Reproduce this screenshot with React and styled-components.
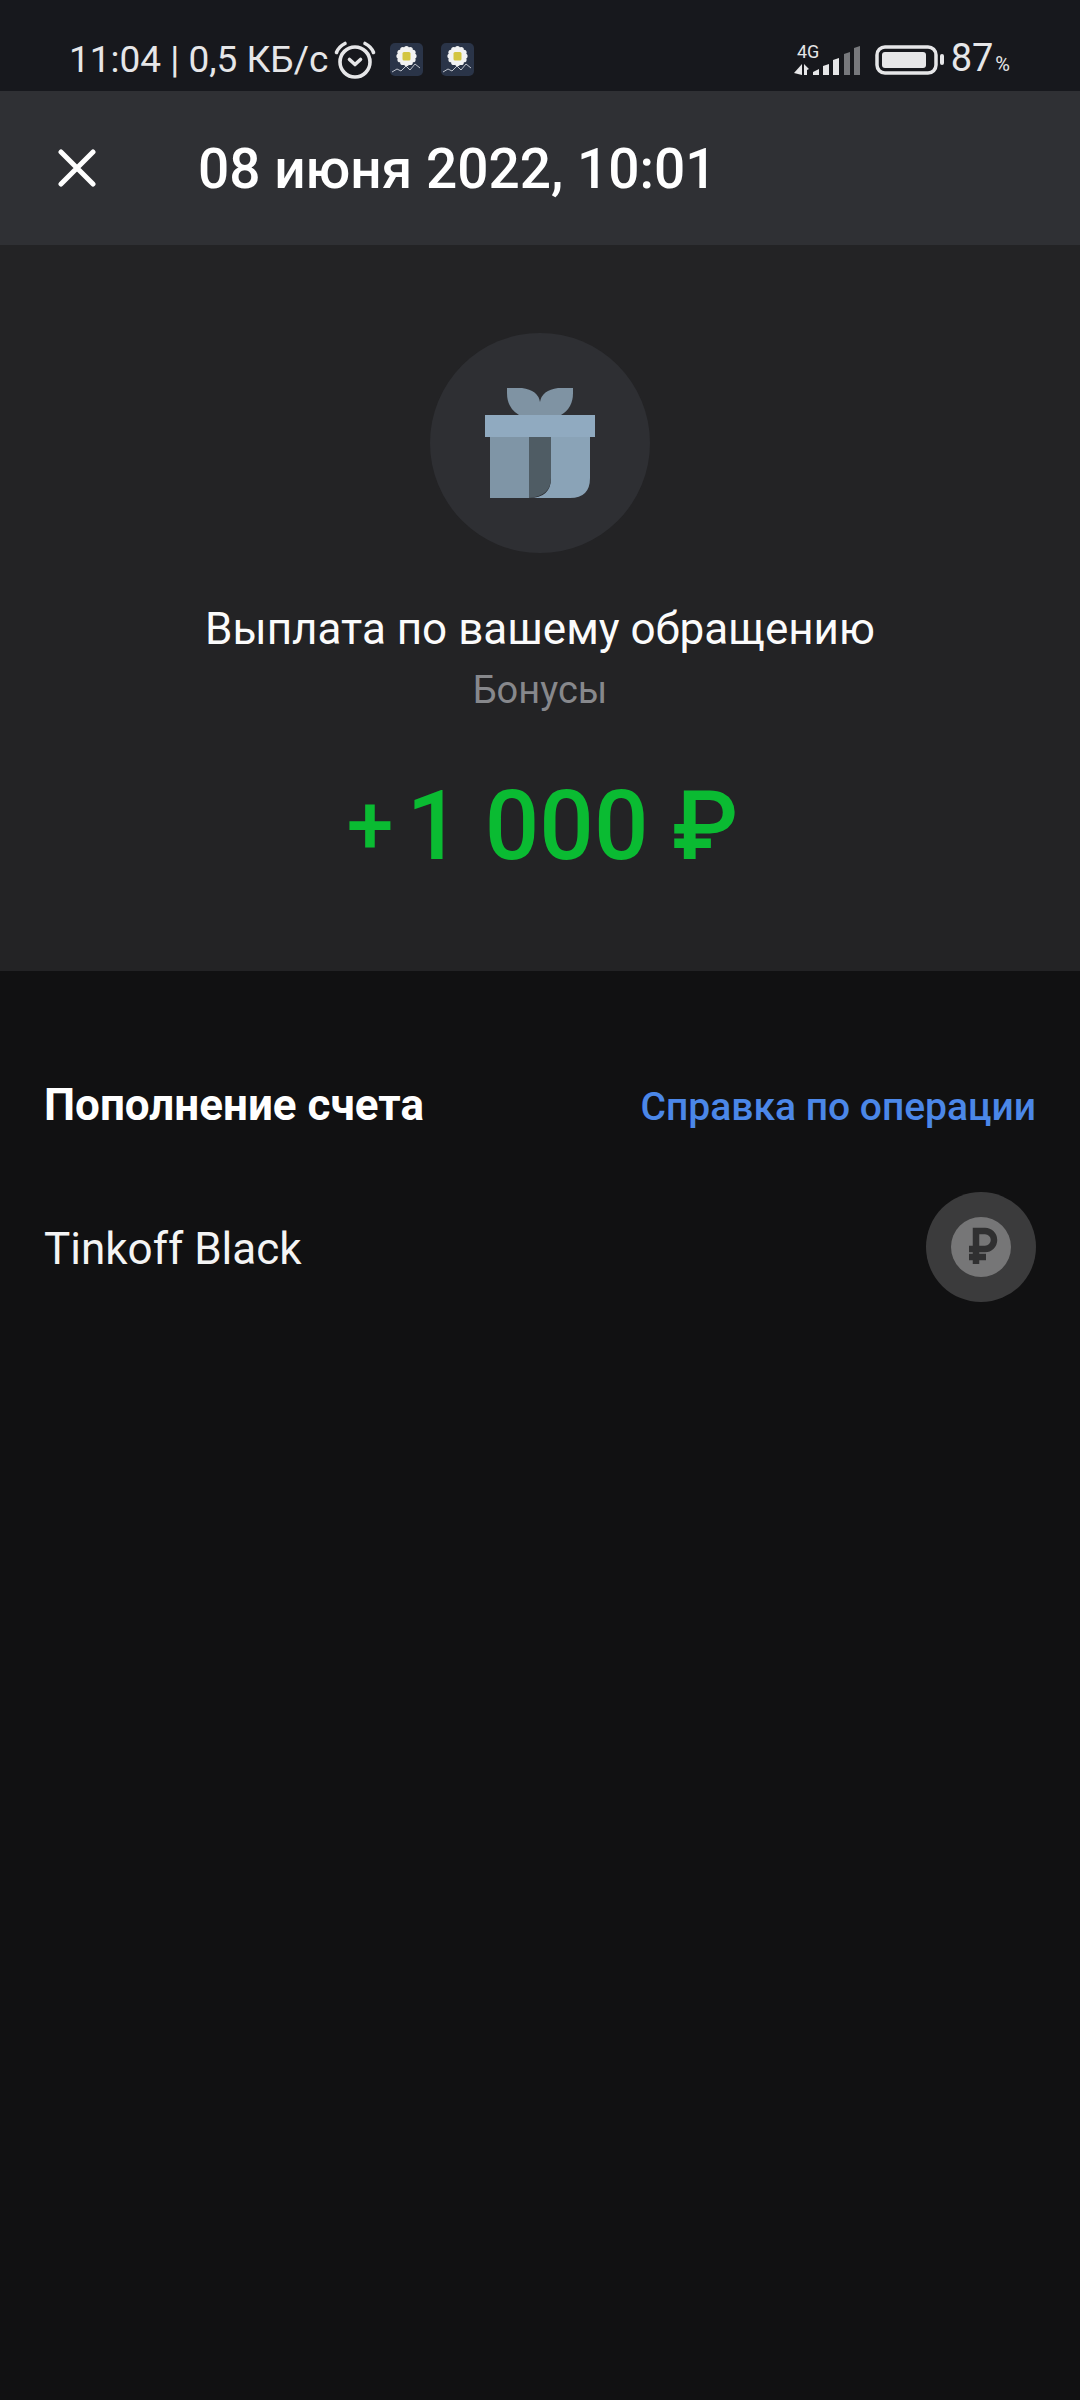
import React from "react";
import styled, { createGlobalStyle } from "styled-components";

const Global = createGlobalStyle`
  html, body { margin: 0; padding: 0; background: #111112; }
  * { box-sizing: border-box; }
`;
const Page = styled.div`
  width: 1080px; height: 2400px; background: #111112; color: #fff;
  font-family: Roboto, "Noto Sans", sans-serif;
  display: flex; flex-direction: column; overflow: hidden;
`;
const StatusBar = styled.div`
  height: 91px; background: #17181d; display: flex; align-items: center;
  padding: 28px 0 0 69px; color: #e6e6e8; font-size: 37px; line-height: 42px; font-weight: 400;
`;
const StatusText = styled.span`white-space: nowrap;`;
const AlarmIcon = styled.svg`width: 44px; height: 40px; margin-left: 5px; flex: none;`;
const AppIcon = styled.svg`width: 33px; height: 33px; margin-left: ${p => p.$gap}px; flex: none;`;
const StatusRight = styled.div`margin-left: auto; display: flex; align-items: center; padding-right: 70px;`;
const SignalIcon = styled.svg`width: 68px; height: 34px; flex: none; overflow: visible;`;
const BatteryIcon = styled.svg`width: 70px; height: 30px; margin-left: 13px; flex: none;`;
const BatteryText = styled.span`margin: 3px 0 0 6px; font-size: 38px; white-space: nowrap;`;
const Percent = styled.span`font-size: 20px; margin-left: 2px;`;
const Header = styled.header`
  height: 154px; background: #2f3034; display: flex; align-items: center; padding-left: 58px;
`;
const CloseIcon = styled.svg`width: 38px; height: 38px; flex: none;`;
const Title = styled.h1`
  margin: 2px 0 0 102px; font-size: 55px; line-height: 64px; font-weight: 500; white-space: nowrap;
`;
const Hero = styled.section`
  height: 726px; background: #232325; display: flex; flex-direction: column; align-items: center;
  padding-top: 88px;
`;
const GiftCircle = styled.svg`width: 220px; height: 220px; flex: none;`;
const HeroTitle = styled.div`margin-top: 50px; font-size: 44px; line-height: 52px; color: #fbfbfb;`;
const HeroSub = styled.div`margin-top: 10px; font-size: 38px; line-height: 50px; color: #87888c;`;
const Amount = styled.div`
  margin-top: 53px; padding-left: 5px; font-size: 96px; line-height: 116px; font-weight: 500; color: #0abb32;
  white-space: nowrap; display: flex; align-items: center;
`;
const PlusSign = styled.span`margin-right: 13px; font-size: 84px;`;
const Section = styled.section`padding: 106px 44px 0;`;
const SectionHead = styled.div`display: flex; justify-content: space-between; align-items: center; height: 56px;`;
const SectionTitle = styled.div`font-size: 44px; line-height: 56px; font-weight: 700; color: #fff;`;
const SectionLink = styled.a`font-size: 39px; line-height: 56px; margin-top: 3px; font-weight: 500; color: #4b87e8;`;
const AccountRow = styled.div`display: flex; justify-content: space-between; align-items: center; margin-top: 59px;`;
const AccountName = styled.div`font-size: 44px; line-height: 52px; margin-top: 3px; color: #f4f4f4;`;
const AccountIcon = styled.svg`width: 110px; height: 110px; flex: none;`;

const Emblem = ({ gap }) => (
  <AppIcon $gap={gap} viewBox="0 0 33 33">
    <rect width="33" height="33" rx="5" fill="#2a3448" />
    <g fill="#f2f2f2">
      {Array.from({ length: 12 }).map((_, i) => {
        const a = (i * Math.PI) / 6;
        return <circle key={i} cx={16.5 + 7.5 * Math.cos(a)} cy={13 + 7.5 * Math.sin(a)} r="2.6" />;
      })}
      <circle cx="16.5" cy="13" r="8" />
    </g>
    <rect x="12.5" y="9" width="8" height="8.5" rx="1.5" fill="#d3c541" />
    <path d="M2 29l5-3 4 2 5-5 4 4 5-6 5 4" fill="none" stroke="#cfd3da" strokeWidth="0.9" />
  </AppIcon>
);

export default function App() {
  return (
    <Page>
      <Global />
      <StatusBar>
        <StatusText>11:04 | 0,5 КБ/с</StatusText>
        <AlarmIcon viewBox="0 0 44 40">
          <circle cx="22" cy="22" r="15" fill="none" stroke="#e6e6e8" strokeWidth="3.6" />
          <path d="M16.5 19.5l5.5 5 5.5-5" fill="none" stroke="#e6e6e8" strokeWidth="3.6" strokeLinecap="round" strokeLinejoin="round" />
          <path d="M3.5 12.5C5 8.5 8 5.5 12 3.5M40.5 12.5C39 8.5 36 5.5 32 3.5" fill="none" stroke="#e6e6e8" strokeWidth="3.6" strokeLinecap="round" />
        </AlarmIcon>
        <Emblem gap={13} />
        <Emblem gap={18} />
        <StatusRight>
          <SignalIcon viewBox="797 42 68 34">
            <text x="800" y="57" fontSize="18" fill="#e6e6e8" fontFamily="Roboto, sans-serif">4G</text>
            <path d="M805 63v11l-8-2zM807 63l5 5-2 1v5h-3z" fill="#e6e6e8" />
            <g fill="#e6e6e8">
              <path d="M816 74v-3l6-3v6zM826 74v-9l6-2v11zM836 74v-15l6-2v17z" />
            </g>
            <path d="M847 74v-21l6-2v23zM857 74v-27l6-2v29z" fill="#77787c" />
          </SignalIcon>
          <BatteryIcon viewBox="0 0 70 30">
            <rect x="2" y="2" width="59" height="26" rx="8" fill="none" stroke="#e6e6e8" strokeWidth="3.5" />
            <rect x="7" y="7" width="44" height="16" rx="3" fill="#e6e6e8" />
            <rect x="65" y="9" width="4" height="11" rx="2" fill="#e6e6e8" />
          </BatteryIcon>
          <BatteryText>87<Percent>%</Percent></BatteryText>
        </StatusRight>
      </StatusBar>
      <Header>
        <CloseIcon viewBox="0 0 38 38">
          <path d="M3 3l32 32M35 3L3 35" stroke="#fff" strokeWidth="5" strokeLinecap="round" />
        </CloseIcon>
        <Title>08 июня 2022, 10:01</Title>
      </Header>
      <Hero>
        <GiftCircle viewBox="0 0 220 220">
          <circle cx="110" cy="110" r="110" fill="#2e2f33" />
          <path d="M77 55H92Q108 57 110 69Q112 57 128 55H143V60Q143 75 131 82H89Q77 75 77 60Z" fill="#7f93a3" />
          <path d="M60 104H99V165H60Z" fill="#7f95a6" />
          <path d="M99 165H140Q160 165 160 145V104H121V145Q121 165 99 165Z" fill="#8aa3b7" />
          <path d="M99 104H121V145Q121 163 99 165Z" fill="#4f5c64" />
          <rect x="55" y="82" width="110" height="22" fill="#90aac0" />
        </GiftCircle>
        <HeroTitle>Выплата по вашему обращению</HeroTitle>
        <HeroSub>Бонусы</HeroSub>
        <Amount><PlusSign>+</PlusSign>1 000 ₽</Amount>
      </Hero>
      <Section>
        <SectionHead>
          <SectionTitle>Пополнение счета</SectionTitle>
          <SectionLink>Справка по операции</SectionLink>
        </SectionHead>
        <AccountRow>
          <AccountName>Tinkoff Black</AccountName>
          <AccountIcon viewBox="0 0 110 110">
            <circle cx="55" cy="55" r="55" fill="#3b3b3c" />
            <circle cx="55" cy="55" r="30" fill="#767677" />
            <path d="M50 39H59a8.5 8.5 0 0 1 0 18H50ZM43 57H60M43 65H60M50 39V72" fill="none" stroke="#303031" strokeWidth="6.5" />
          </AccountIcon>
        </AccountRow>
      </Section>
    </Page>
  );
}
